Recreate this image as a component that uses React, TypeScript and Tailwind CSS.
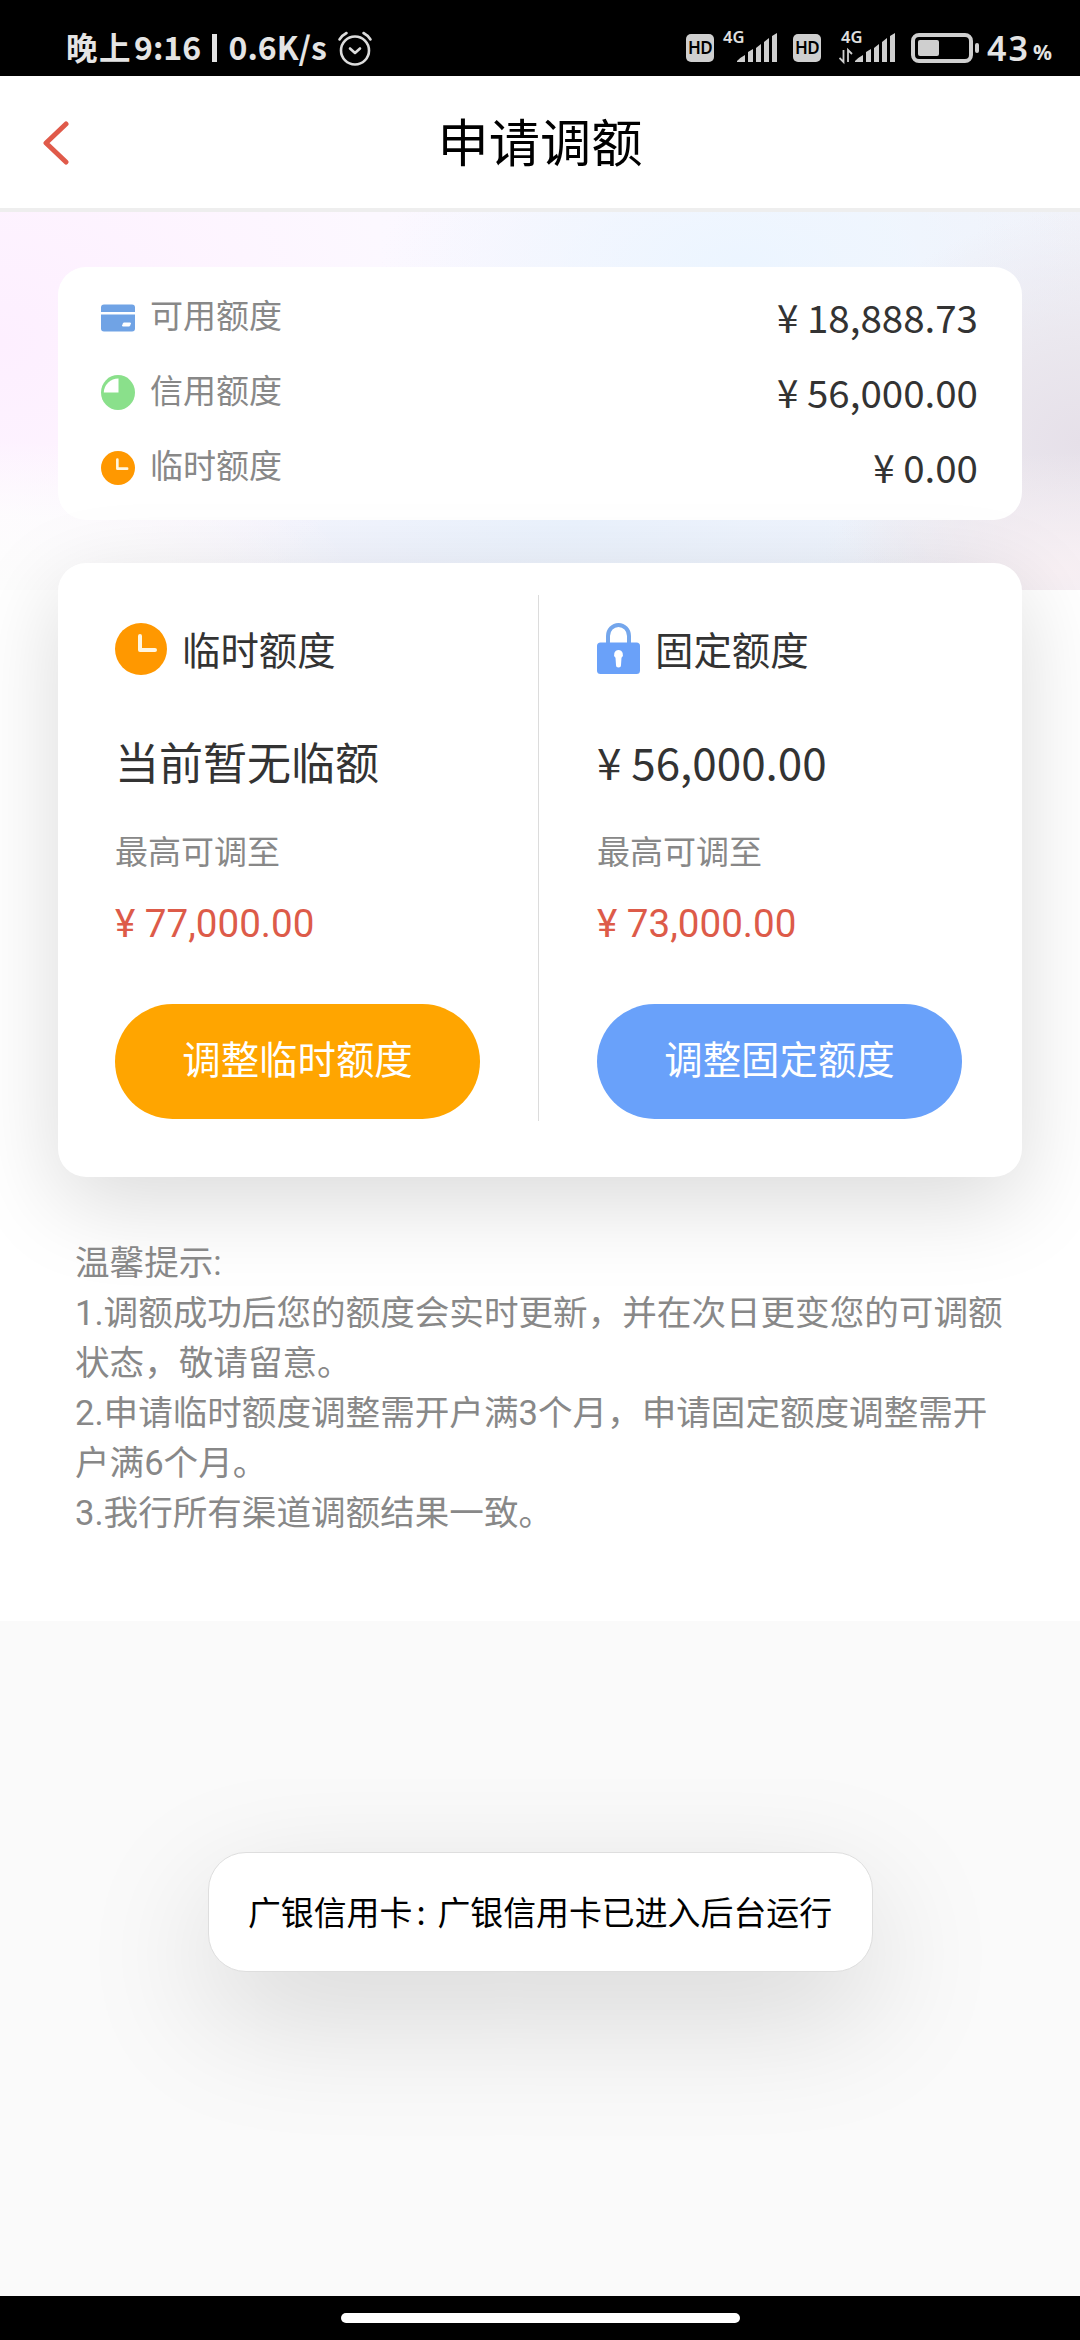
import type { ReactNode } from 'react';

interface LimitRowProps {
  icon: ReactNode;
  label: string;
  amount: string;
}

interface LimitPanelProps {
  icon: ReactNode;
  title: string;
  current: string;
  max: string;
  action: string;
  buttonClass: string;
}

function ClockIcon({ className }: { className: string }) {
  return (
    <svg viewBox="0 0 52 52" className={className}>
      <circle cx="26" cy="26" r="26" fill="#ff9800" />
      <path d="M25 13v14h15" fill="none" stroke="#fff6e0" strokeWidth="4" strokeLinecap="round" strokeLinejoin="round" />
    </svg>
  );
}

function CardIcon() {
  return (
    <svg viewBox="0 0 34 28" className="w-[34px] h-7">
      <path d="M0 8V3.500a3 3 0 0 1 3-3h28a3 3 0 0 1 3 3V8z" fill="#70a3e5" />
      <path d="M0 10.500h34V24.500a3 3 0 0 1-3 3H3a3 3 0 0 1-3-3z" fill="#70a3e5" />
      <path d="M22.500 19h7l-1 3h-7z" fill="#fff" stroke="#fff" strokeLinejoin="round" />
    </svg>
  );
}

function PieIcon() {
  return (
    <svg viewBox="0 0 34 35" className="w-[34px] h-[35px]">
      <ellipse cx="17" cy="17.500" rx="17" ry="17.500" fill="#8ae08b" />
      <path d="M17.500 3.500v14H2.800A14.500 14.500 0 0 1 17.500 3.500z" fill="#fff" />
    </svg>
  );
}

function LockIcon() {
  return (
    <svg viewBox="0 0 43 52" className="w-[43px] h-[52px]">
      <path d="M11 20v-7a10.500 11 0 0 1 21 0V20" fill="none" stroke="#74a6ec" strokeWidth="4" />
      <rect y="19.500" width="43" height="31.500" rx="3.500" fill="#6aa1f9" />
      <path d="M21.500 27a4.500 4.500 0 0 1 3 7.800l-.5 7.200a2.500 2.500 0 0 1-5 0l-.5-7.200a4.500 4.500 0 0 1 3-7.800z" fill="#fff" />
    </svg>
  );
}

function AlarmIcon() {
  return (
    <svg viewBox="0 0 36 36" className="w-9 h-9" fill="none" stroke="#dcdcdc" strokeWidth="2.600" strokeLinecap="round" strokeLinejoin="round">
      <circle cx="18" cy="20.500" r="14" />
      <path d="M2.500 9.500q3-4.500 7-6.500M33.500 9.500q-3-4.500-7-6.500M13 18.500l5 4.500 5-4.500" />
    </svg>
  );
}

function HdBadge() {
  return (
    <div className="w-7 h-7 rounded-[5px] bg-[#cfcfcf] text-black text-[17px] font-semibold flex items-center justify-center tracking-[-0.5px] font-['Noto_Sans']">
      HD
    </div>
  );
}

function Signal({ data }: { data?: boolean }) {
  return (
    <svg viewBox="0 -8 56 42" className="w-14 h-[42px] -mt-2">
      <text x="2" y="12" fontSize="16.500" fontWeight="600" fill="#e0e0e0" fontFamily="Noto Sans">4G</text>
      {data && <path d="M4.500 19v12l-4-4M9 31V19l4 4" fill="none" stroke="#cfcfcf" strokeWidth="1.800" />}
      <g fill="#cfcfcf">
        <path d="M16 30q4-4 8-6v7h-8zM27 21l5-3v13h-5zM35 17l5-4v18h-5zM43 11l5-4v24h-5zM51 5l5-3v29h-5z" />
      </g>
    </svg>
  );
}

function StatusBar() {
  return (
    <div className="h-[76px] bg-black text-[#e4e4e4] flex justify-between pt-[28px] pl-[66px] pr-[28px]">
      <div className="flex items-center h-10 font-bold text-[31.500px] leading-10">
        <span className="w-[68px] -mt-1 tracking-[1.500px]">晚上</span>
        <span className="w-[78px] -mt-1 text-[32px]">9:16</span>
        <span className="w-[4.500px] h-7 mr-[12px] bg-[#e4e4e4]" />
        <span className="w-[108px] -mt-1 text-[32px]">0.6K/s</span>
        <AlarmIcon />
      </div>
      <div className="flex items-start pt-[3px]">
        <div className="pt-[3px]"><HdBadge /></div>
        <div className="ml-[7px]"><Signal /></div>
        <div className="ml-4 pt-[3px]"><HdBadge /></div>
        <div className="ml-[18px]"><Signal data /></div>
        <svg viewBox="0 0 68 30" className="w-[68px] h-[30px] ml-4 mt-[2px]">
          <rect x="2" y="2" width="58" height="26" rx="6" fill="none" stroke="#cfcfcf" strokeWidth="4" />
          <rect x="7" y="7" width="21" height="16" rx="2" fill="#cfcfcf" />
          <rect x="64" y="10" width="4" height="10" rx="2" fill="#cfcfcf" />
        </svg>
        <span className="ml-2 w-[46px] text-[34px] leading-[34px] font-semibold tracking-[2px] font-['Noto_Sans']">43</span>
        <span className="text-[21px] leading-[42px] font-bold font-['Noto_Sans']">%</span>
      </div>
    </div>
  );
}

function LimitRow({ icon, label, amount }: LimitRowProps) {
  return (
    <div className="flex items-center h-[75px]">
      <div className="w-[34px] mr-[15px] pt-0.5">{icon}</div>
      <span className="text-[33px] text-[#888] -mt-1">{label}</span>
      <span className="ml-auto text-[38.500px] text-[#333]">{amount}</span>
    </div>
  );
}

function LimitPanel({ icon, title, current, max, action, buttonClass }: LimitPanelProps) {
  return (
    <div className="w-[365px] flex flex-col text-[#333]">
      <div className="flex items-center gap-[15px] h-[52px] mt-[60px]">
        {icon}
        <span className="text-[38.400px]">{title}</span>
      </div>
      <div className="text-[44px] leading-[64px] mt-[54px]">{current}</div>
      <div className="text-[33px] leading-[48px] mt-[33px] text-[#888]">最高可调至</div>
      <div className="text-[38.600px] leading-[48px] mt-[26px] text-[#dd5b49] font-[Roboto]">{max}</div>
      <button className={`mt-[56px] h-[115px] rounded-full text-white text-[38.400px] pb-2 ${buttonClass}`}>{action}</button>
    </div>
  );
}

export default function App() {
  return (
    <div className="w-[1080px] h-[2340px] flex flex-col bg-[#fafafa] font-['Noto_Sans_CJK_SC',sans-serif] overflow-hidden">
      <StatusBar />

      <header className="h-[136px] bg-white border-b-4 border-[#eeeeee] grid grid-cols-[1fr_auto_1fr] items-center">
        <svg viewBox="0 0 26 44" className="w-[26px] h-11 ml-[43px] mt-[1px]" fill="none" stroke="#e05a4a" strokeWidth="5" strokeLinecap="round" strokeLinejoin="round">
          <path d="M23 3L3 22l20 19" />
        </svg>
        <h1 className="text-[51.200px] text-black leading-none pb-0.5">申请调额</h1>
      </header>

      <main className="h-[1409px] bg-white overflow-hidden">
        {/* pastel backdrop behind the summary card, the action card hangs below it */}
        <div className="h-[378px] px-[58px] pt-[55px] bg-[radial-gradient(ellipse_360px_150px_at_0px_378px,#fdfdfd_0%,#fdfdfdcc_50%,transparent_100%),radial-gradient(ellipse_240px_120px_at_1060px_360px,#f8f0f4_0%,transparent_100%),radial-gradient(ellipse_400px_330px_at_0px_130px,#fdefff_0%,#fdf2ffcc_45%,transparent_100%),radial-gradient(ellipse_260px_230px_at_1080px_230px,#e6e0e9_0%,#e9e5ecdd_40%,transparent_100%),radial-gradient(ellipse_360px_160px_at_740px_50px,#ecf5ff_0%,transparent_100%),radial-gradient(ellipse_600px_160px_at_580px_310px,#eaf2fd_0%,transparent_100%),linear-gradient(90deg,#fff8ff_0%,#fcf8ff_35%,#f3f6fd_80%,#f1f2f9_100%)]">
          <section className="h-[253px] rounded-[28px] bg-white pl-[43px] pr-[44px] pt-[12px] mb-[43px]">
            <LimitRow icon={<CardIcon />} label="可用额度" amount="¥ 18,888.73" />
            <LimitRow icon={<PieIcon />} label="信用额度" amount="¥ 56,000.00" />
            <LimitRow icon={<ClockIcon className="w-[34px] h-[34px]" />} label="临时额度" amount="¥ 0.00" />
          </section>

          <section className="h-[614px] rounded-[28px] bg-white shadow-[0_25px_90px_rgba(0,0,0,0.15)] flex pl-[57px]">
            <LimitPanel
              icon={<ClockIcon className="w-[52px] h-[52px]" />}
              title="临时额度"
              current="当前暂无临额"
              max="¥ 77,000.00"
              action="调整临时额度"
              buttonClass="bg-[#ffa500]"
            />
            <div className="w-px h-[526px] mt-8 ml-[58px] mr-[58px] bg-[#dcdcdc]" />
            <LimitPanel
              icon={<LockIcon />}
              title="固定额度"
              current="¥ 56,000.00"
              max="¥ 73,000.00"
              action="调整固定额度"
              buttonClass="bg-[#69a1fa]"
            />
          </section>

          <div className="mt-[61px] pl-[17px] w-[962px] text-[34.600px] leading-[50px] text-[#888] whitespace-nowrap font-['Roboto','Noto_Sans_CJK_SC',sans-serif]">
            <p>温馨提示:</p>
            <p>1.调额成功后您的额度会实时更新，并在次日更变您的可调额<br />状态，敬请留意。</p>
            <p>2.申请临时额度调整需开户满3个月，申请固定额度调整需开<br />户满6个月。</p>
            <p>3.我行所有渠道调额结果一致。</p>
          </div>
        </div>
      </main>

      <div className="flex-1 flex justify-center items-start pt-[231px]">
        <div className="w-[665px] h-[120px] rounded-[38px] bg-white border border-[#dedede] shadow-[0_42px_130px_rgba(0,0,0,0.15)] flex items-center justify-center text-[32.900px] text-black whitespace-nowrap pb-0.5">
          广银信用卡<span className="w-[25px] pl-1">:</span>广银信用卡已进入后台运行
        </div>
      </div>

      <footer className="h-11 bg-black flex justify-center pt-[17px]">
        <div className="w-[399px] h-2.5 rounded-full bg-white" />
      </footer>
    </div>
  );
}
